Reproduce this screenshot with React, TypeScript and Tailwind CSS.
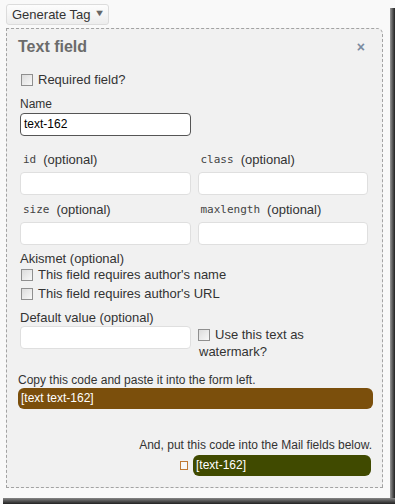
import React from 'react';

const Check = () => (
  <span className="inline-block w-[12px] h-[12px] border border-[#8f8f8f] bg-gradient-to-br from-[#dcdcdc] to-[#f8f8f8] shrink-0" />
);

const Field = ({ code }: { code: string }) => (
  <div className="flex flex-col">
    <div className="h-[16px] flex items-center gap-[7px] pl-[3px] text-[13px] leading-[16px] text-[#333]">
      <span className="font-['DejaVu_Sans_Mono',monospace] text-[11px] text-[#444]">{code}</span>
      <span>(optional)</span>
    </div>
    <div className="mt-[4px] h-[23px] bg-white border border-[#dfdfdf] rounded-[4px]" />
  </div>
);

export default function App() {
  return (
    <div className="w-[395px] h-[504px] bg-[#f9f9f9] relative overflow-hidden font-['Liberation_Sans',Arial,sans-serif] text-[12px] leading-[15px] text-[#333]">
      {/* window shadow */}
      <div className="absolute right-0 top-[8px] bottom-0 w-[5px] bg-gradient-to-r from-[#9a9a9a] to-[#222]" />
      <div className="absolute left-[3px] right-0 bottom-0 h-[6px] bg-gradient-to-b from-[#888] to-[#222]" />

      <div className="pl-[6px] pt-[4px] w-[389px]">
        <button className="h-[21px] px-[5px] flex items-center gap-[4px] rounded-[3px] border border-[#dcdcdc] bg-gradient-to-b from-[#fdfdfd] to-[#ededed] text-[13px] text-[#333]">
          Generate Tag
          <span className="text-[9px] text-[#666] leading-none -mt-[2px] scale-x-125">▼</span>
        </button>

        <div className="mt-[3px] w-[377px] h-[460px] border border-dashed border-[#a3a3a3] rounded-tr-[6px] bg-[#f1f1f1] pl-[11px] pr-[12px] pt-[8px]">
          <div className="h-[20px] flex items-center justify-between pr-[2px]">
            <span className="text-[16px] leading-[20px] font-bold text-[#6b6b6b]">Text field</span>
            <span className="text-[14px] leading-[20px] font-bold text-[#7a8aa0] mr-[3px]">×</span>
          </div>

          <label className="mt-[15px] ml-[3px] h-[16px] flex items-center gap-[5px] text-[13px] leading-[16px]">
            <Check />
            Required field?
          </label>

          <div className="mt-[9px] ml-[2px] text-[12px] leading-[15px]">Name</div>
          <div className="mt-[1px] ml-[2px] w-[171px] h-[23px] bg-white border border-[#555] rounded-[4px] flex items-center px-[3px] text-[12px] text-black">
            text-162
          </div>

          <div className="mt-[16px] grid grid-cols-2 gap-x-[7px] gap-y-[7px] w-[348px] ml-[2px]">
            <Field code="id" />
            <Field code="class" />
            <Field code="size" />
            <Field code="maxlength" />
          </div>

          <div className="mt-[6px] ml-[2px] text-[13px] leading-[15px]">Akismet (optional)</div>
          <label className="mt-[1px] ml-[3px] h-[16px] flex items-center gap-[5px] text-[13px] leading-[16px]">
            <Check />
            This field requires author's name
          </label>
          <label className="mt-[3px] ml-[3px] h-[16px] flex items-center gap-[5px] text-[13px] leading-[16px]">
            <Check />
            This field requires author's URL
          </label>

          <div className="mt-[8px] ml-[2px] text-[13px] leading-[15px]">Default value (optional)</div>
          <div className="mt-[1px] ml-[2px] flex gap-[7px]">
            <div className="w-[171px] h-[23px] bg-white border border-[#dfdfdf] rounded-[4px]" />
            <div className="text-[13px] leading-[17px]">
              <div className="flex items-center gap-[5px]">
                <Check />
                Use this text as
              </div>
              <div className="pl-[1px]">watermark?</div>
            </div>
          </div>

          <div className="mt-[13px] text-[12px] leading-[15px]">Copy this code and paste it into the form left.</div>
          <div className="w-[355px] h-[21px] rounded-[6px] bg-[#7b4f0c] text-white text-[12px] flex items-center px-[3px]">
            [text text-162]
          </div>

          <div className="mt-[29px] w-[354px] text-right text-[12px] leading-[15px]">And, put this code into the Mail fields below.</div>
          <div className="mt-[2px] w-[353px] flex justify-end items-center gap-[5px]">
            <span className="inline-block w-[8px] h-[9px] border border-[#c07a35] bg-[#f8f8f8]" />
            <div className="w-[178px] h-[21px] rounded-[6px] bg-[#404a00] text-white text-[12px] flex items-center px-[3px]">
              [text-162]
            </div>
          </div>
        </div>
      </div>
    </div>
  );
}
